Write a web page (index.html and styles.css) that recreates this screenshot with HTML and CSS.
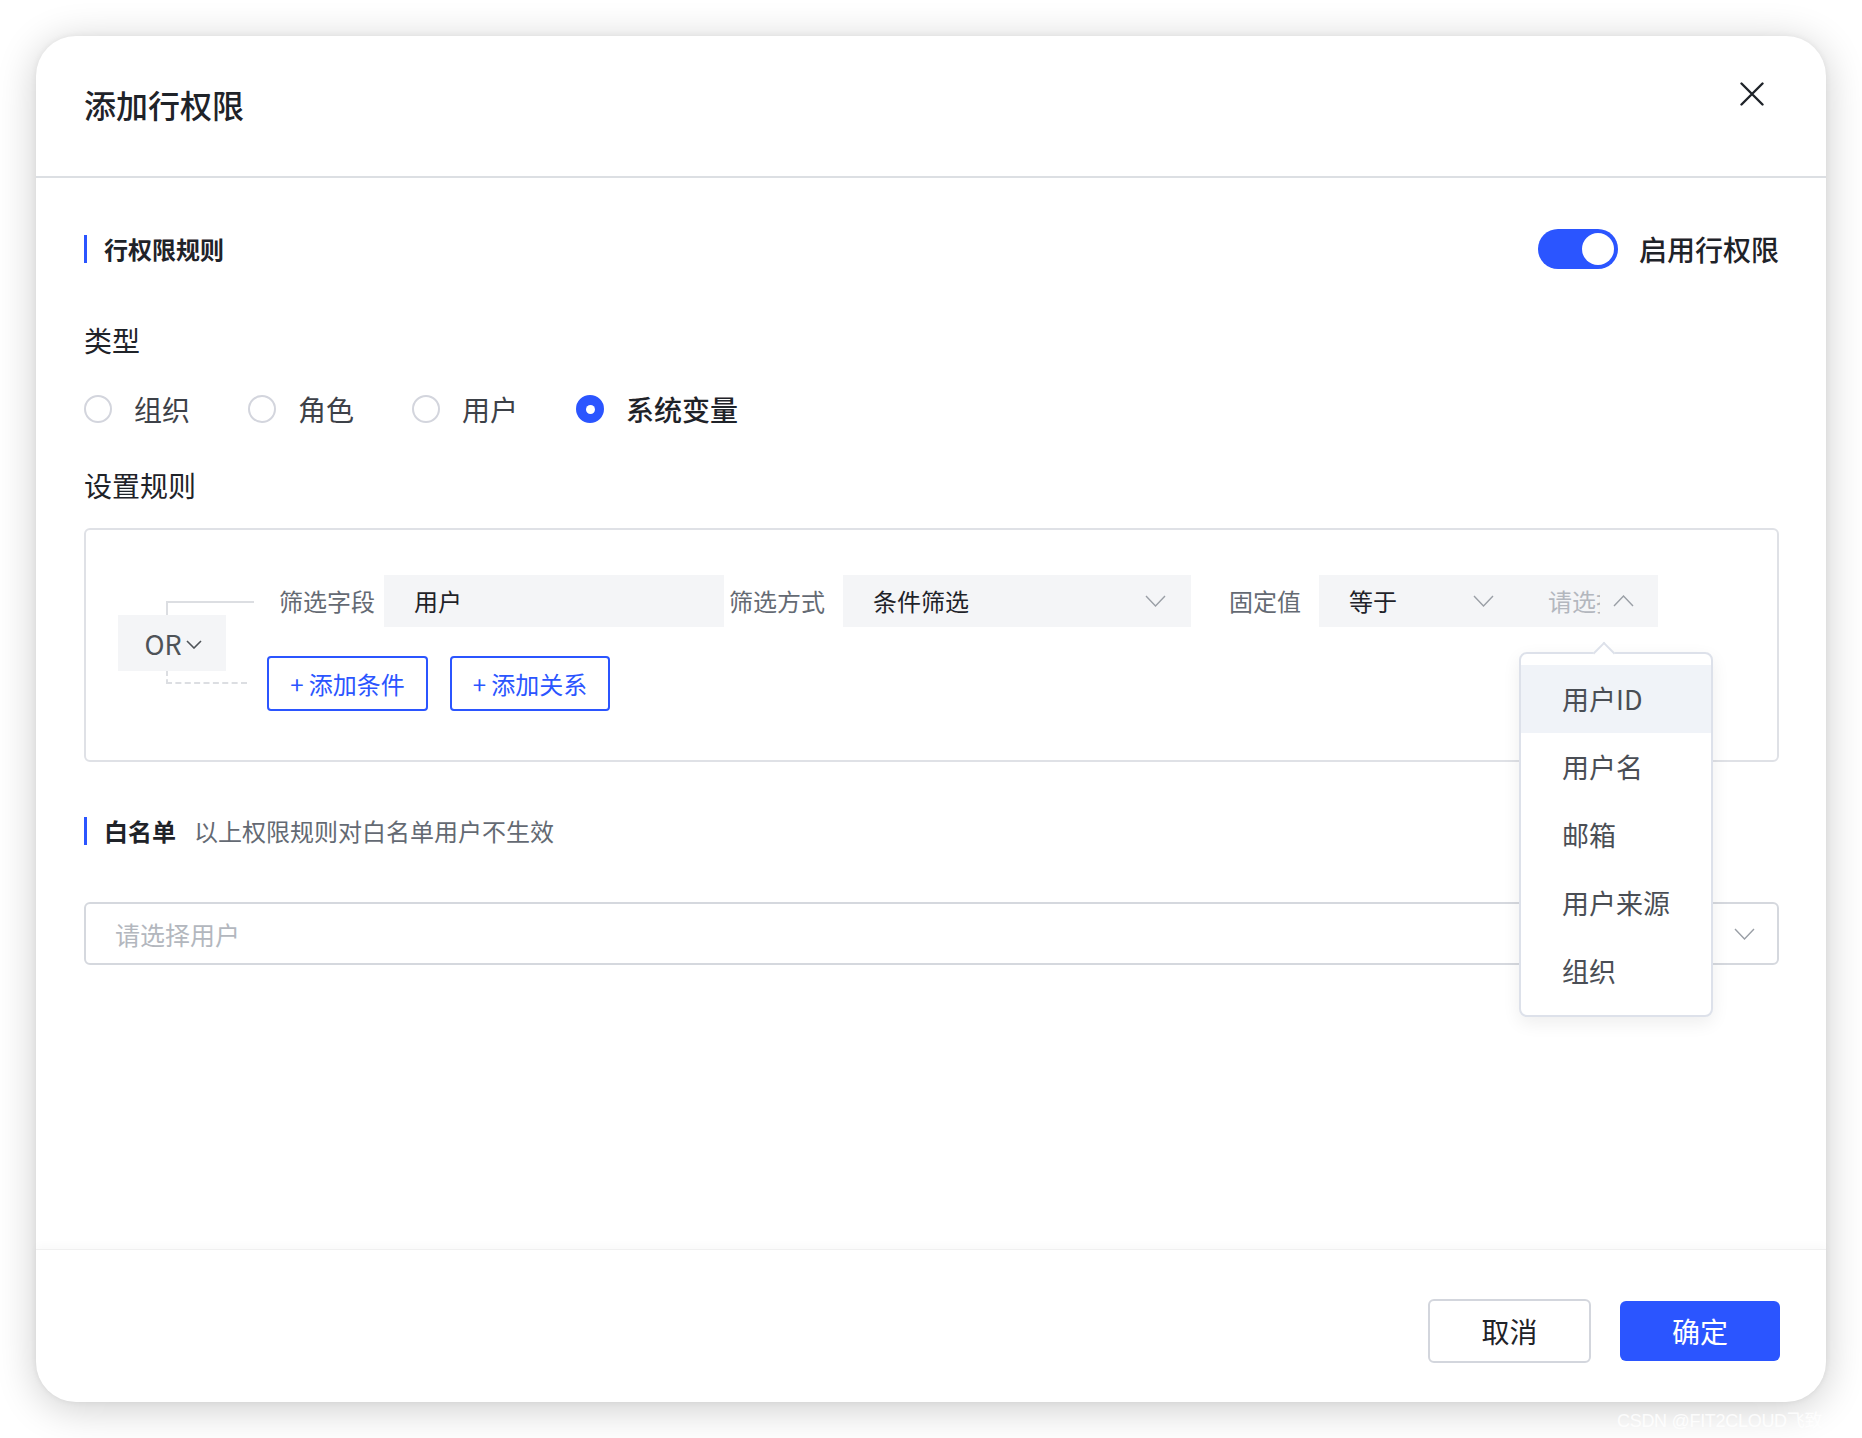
FILE: index.html
```html
<!DOCTYPE html>
<html lang="zh-CN">
<head>
<meta charset="utf-8">
<title>添加行权限</title>
<link rel="stylesheet" href="styles.css">
</head>
<body>
<div class="dialog">
  <div class="dlg-header">
    <div class="dlg-title">添加行权限</div>
    <button class="close-btn" aria-label="关闭">
      <svg width="24" height="24" viewBox="0 0 24 24"><path d="M1.5 1.5 L22.5 22.5 M22.5 1.5 L1.5 22.5" stroke="#1f2329" stroke-width="2.4" fill="none" stroke-linecap="round"/></svg>
    </button>
  </div>

  <div class="dlg-body">
    <div class="section-row">
      <div class="section-title"><span class="bar"></span>行权限规则</div>
      <div class="switch-wrap">
        <span class="switch"><span class="knob"></span></span>
        <span class="switch-label">启用行权限</span>
      </div>
    </div>

    <div class="field-label label-type">类型</div>
    <div class="radio-group">
      <label class="radio"><span class="circle"></span><span class="radio-text">组织</span></label>
      <label class="radio"><span class="circle"></span><span class="radio-text">角色</span></label>
      <label class="radio"><span class="circle"></span><span class="radio-text">用户</span></label>
      <label class="radio checked"><span class="circle"><span class="dot"></span></span><span class="radio-text">系统变量</span></label>
    </div>

    <div class="field-label label-rule">设置规则</div>
    <div class="rule-box">
      <div class="logic">
        <div class="conn-top"></div>
        <div class="or-box">OR<svg class="or-chev" width="16" height="9" viewBox="0 0 16 9"><path d="M1 1 L8 8 L15 1" stroke="#4e5358" stroke-width="1.6" fill="none"/></svg></div>
        <div class="conn-bot"></div>
      </div>
      <div class="rows">
        <div class="cond-row">
          <span class="cond-label l1">筛选字段</span>
          <div class="inp w-field"><span class="val">用户</span></div>
          <span class="cond-label l2">筛选方式</span>
          <div class="inp sel w-mode"><span class="val">条件筛选</span><svg width="21" height="12" viewBox="0 0 21 12"><path d="M1 1 L10.5 11 L20 1" stroke="#9a9fa6" stroke-width="1.4" fill="none"/></svg></div>
          <span class="cond-label l3">固定值</span>
          <div class="inp sel w-op"><span class="val">等于</span><svg width="21" height="12" viewBox="0 0 21 12"><path d="M1 1 L10.5 11 L20 1" stroke="#9a9fa6" stroke-width="1.4" fill="none"/></svg></div>
          <div class="inp sel w-value">
            <span class="ph clip">请选择</span>
            <svg width="21" height="12" viewBox="0 0 21 12"><path d="M1 11 L10.5 1 L20 11" stroke="#9a9fa6" stroke-width="1.4" fill="none"/></svg>
            <div class="dropdown">
              <span class="arrow"></span>
              <div class="dd-item active">用户ID</div>
              <div class="dd-item">用户名</div>
              <div class="dd-item">邮箱</div>
              <div class="dd-item">用户来源</div>
              <div class="dd-item">组织</div>
            </div>
          </div>
        </div>
        <div class="btn-row">
          <button class="btn-outline add-cond">+ 添加条件</button>
          <button class="btn-outline add-rel">+ 添加关系</button>
        </div>
      </div>
    </div>

    <div class="section-row wl-row">
      <div class="section-title"><span class="bar"></span>白名单<span class="wl-desc">以上权限规则对白名单用户不生效</span></div>
    </div>
    <div class="user-select">
      <span class="ph">请选择用户</span>
      <svg width="21" height="12" viewBox="0 0 21 12"><path d="M1 1 L10.5 11 L20 1" stroke="#9a9fa6" stroke-width="1.4" fill="none"/></svg>
    </div>
  </div>

  <div class="dlg-footer">
    <button class="btn-cancel">取消</button>
    <button class="btn-ok">确定</button>
  </div>
</div>
<div class="watermark">CSDN @FIT2CLOUD飞致</div>
</body>
</html>
```

FILE: styles.css
```css
* { box-sizing: border-box; }

html, body {
  margin: 0;
  padding: 0;
  background: #ffffff;
}

body {
  padding: 36px;
  width: 1862px;
  height: 1438px;
  overflow: hidden;
  font-family: "Noto Sans CJK SC", "Noto Sans", "Inter", sans-serif;
  color: #1f2329;
  position: relative;
}

button {
  font-family: inherit;
  cursor: pointer;
}

.dialog {
  width: 1790px;
  height: 1366px;
  background: #fff;
  border-radius: 40px;
  box-shadow: 0 6px 40px rgba(0, 0, 0, 0.20), 0 0 6px rgba(0, 0, 0, 0.06);
  display: flex;
  flex-direction: column;
}

/* header */
.dlg-header {
  height: 142px;
  border-bottom: 2px solid #dcdfe3;
  display: flex;
  align-items: center;
  justify-content: space-between;
  padding: 0 62px 4px 48px;
}

.dlg-title {
  font-size: 32px;
  font-weight: 500;
  line-height: 44px;
  color: #1f2329;
}

.close-btn {
  align-self: flex-start;
  margin-top: 46px;
  width: 24px;
  height: 24px;
  padding: 0;
  border: 0;
  background: transparent;
  display: flex;
}

/* body */
.dlg-body {
  flex: 1;
  padding: 0 47px 0 48px;
  display: flex;
  flex-direction: column;
}

.section-row {
  margin-top: 51px;
  height: 40px;
  display: flex;
  align-items: center;
  justify-content: space-between;
}

.section-title {
  display: flex;
  align-items: center;
  font-size: 24px;
  font-weight: 700;
  color: #1f2329;
  line-height: 34px;
}

.section-title .bar {
  width: 3px;
  height: 28px;
  background: #2b55ff;
  margin-right: 17px;
}

.switch-wrap {
  display: flex;
  align-items: center;
}

.switch {
  width: 80px;
  height: 40px;
  border-radius: 20px;
  background: #2b55ff;
  display: flex;
  align-items: center;
  justify-content: flex-end;
  padding-right: 4px;
}

.knob {
  width: 32px;
  height: 32px;
  border-radius: 50%;
  background: #fff;
}

.switch-label {
  margin-left: 21px;
  font-size: 28px;
  font-weight: 500;
  color: #1f2329;
}

.field-label {
  font-size: 28px;
  line-height: 40px;
  color: #1f2329;
}

.label-type { margin-top: 51px; }
.label-rule { margin-top: 36px; }

.radio-group {
  margin-top: 29px;
  height: 40px;
  display: flex;
  align-items: center;
}

.radio {
  display: flex;
  align-items: center;
  margin-right: 58px;
}

.radio .circle {
  width: 28px;
  height: 28px;
  border-radius: 50%;
  border: 2px solid #d3d5dd;
  display: flex;
  align-items: center;
  justify-content: center;
}

.radio.checked .circle {
  border-color: #2b55ff;
  background: #2b55ff;
}

.radio .dot {
  width: 9px;
  height: 9px;
  border-radius: 50%;
  background: #fff;
}

.radio-text {
  margin-left: 22px;
  font-size: 28px;
  color: #3d4148;
}

.radio.checked .radio-text {
  color: #1f2329;
  font-weight: 500;
}

/* rule box */
.rule-box {
  margin-top: 23px;
  height: 234px;
  border: 2px solid #dfe1e6;
  border-radius: 6px;
  display: flex;
  align-items: center;
  padding: 0 0 5px 32px;
  position: relative;
  z-index: 2;
}

.logic {
  width: 136px;
  display: flex;
  flex-direction: column;
}

.conn-top {
  margin-left: 48px;
  width: 88px;
  height: 14px;
  border-left: 2px solid #dcdee2;
  border-top: 2px solid #dcdee2;
}

.or-box {
  width: 108px;
  height: 56px;
  background: #f4f5f7;
  display: flex;
  align-items: center;
  justify-content: center;
  font-size: 27px;
  color: #4e5358;
  padding-left: 2px;
}

.or-chev { margin-left: 4px; margin-top: 2px; }

.conn-bot {
  margin-left: 48px;
  width: 81px;
  height: 13px;
  border-left: 2px dashed #dcdee2;
  border-bottom: 2px dashed #dcdee2;
}

.rows {
  margin-left: 13px;
  display: flex;
  flex-direction: column;
  gap: 29px;
}

.cond-row {
  display: flex;
  align-items: center;
  height: 52px;
}

.cond-label {
  font-size: 24px;
  color: #646a73;
  white-space: nowrap;
}

.l1 { margin: 0 9px 0 12px; }
.l2 { margin: 0 18px 0 5px; }
.l3 { margin: 0 18px 0 38px; }

.inp {
  height: 52px;
  background: #f4f5f7;
  display: flex;
  align-items: center;
  padding-left: 30px;
  font-size: 24px;
  color: #1f2329;
}

.sel {
  justify-content: space-between;
}

.w-field { width: 340px; }
.w-mode { width: 348px; padding-right: 25px; }
.w-op { width: 211px; padding-right: 36px; }
.w-value {
  width: 128px;
  padding-left: 18px;
  padding-right: 24px;
  position: relative;
}

.ph { color: #b3b7be; }

.clip {
  width: 52px;
  overflow: hidden;
  white-space: nowrap;
}

.dropdown {
  position: absolute;
  left: -11px;
  top: 77px;
  width: 194px;
  height: 365px;
  background: #fff;
  border: 2px solid #dde1ea;
  border-radius: 8px;
  box-shadow: 0 6px 18px rgba(0, 0, 0, 0.07);
  padding: 11px 0;
  z-index: 10;
}

.dropdown .arrow {
  position: absolute;
  left: 75px;
  top: -9px;
  width: 16px;
  height: 16px;
  background: #fff;
  border-left: 2px solid #dde1ea;
  border-top: 2px solid #dde1ea;
  transform: rotate(45deg);
}

.dd-item {
  height: 68px;
  display: flex;
  align-items: center;
  padding-left: 41px;
  font-size: 27px;
  color: #4a4e55;
  position: relative;
}

.dd-item.active {
  background: #f0f3f8;
}

.btn-row {
  display: flex;
  gap: 22px;
}

.btn-outline {
  height: 55px;
  border: 2px solid #2b55ff;
  border-radius: 4px;
  background: #fff;
  color: #2b55ff;
  font-size: 24px;
  padding: 0;
}

.add-cond { width: 161px; }
.add-rel { width: 160px; }

/* whitelist */
.wl-row { margin-top: 49px; }

.wl-desc {
  margin-left: 18px;
  font-weight: 400;
  color: #646a73;
}

.user-select {
  margin-top: 51px;
  height: 63px;
  border: 2px solid #d5d8de;
  border-radius: 6px;
  display: flex;
  align-items: center;
  justify-content: space-between;
  padding: 0 22px 0 29px;
  font-size: 25px;
}

/* footer */
.dlg-footer {
  height: 153px;
  border-top: 1px solid #f0f0f0;
  box-shadow: 0 -4px 8px rgba(0, 0, 0, 0.025);
  display: flex;
  align-items: center;
  justify-content: flex-end;
  gap: 29px;
  padding: 9px 46px 0 0;
  border-radius: 0 0 40px 40px;
}

.btn-cancel {
  width: 163px;
  height: 64px;
  border: 2px solid #d3d6dd;
  border-radius: 6px;
  background: #fff;
  font-size: 28px;
  color: #1f2329;
  padding: 0;
}

.btn-ok {
  width: 160px;
  height: 60px;
  border: 0;
  border-radius: 6px;
  background: #2b55ff;
  font-size: 28px;
  color: #fff;
  padding: 0;
}

.watermark {
  position: absolute;
  left: 1617px;
  top: 1406px;
  font-family: "Liberation Sans", "Noto Sans CJK SC", sans-serif;
  font-size: 18px;
  letter-spacing: -0.3px;
  color: rgba(255, 255, 255, 0.85);
  white-space: nowrap;
}
```
